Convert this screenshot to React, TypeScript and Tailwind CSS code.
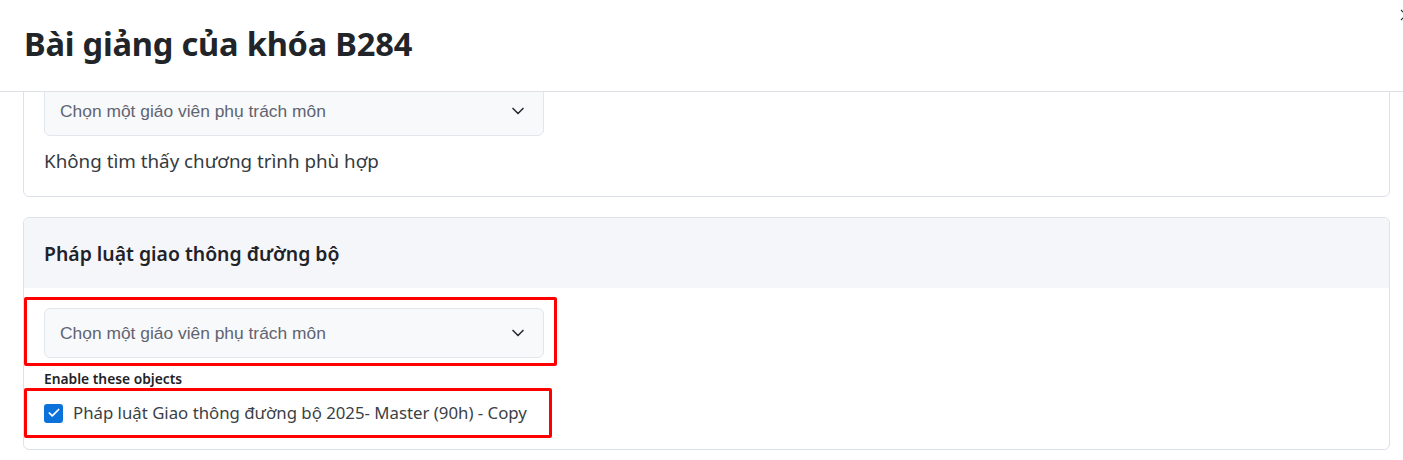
import React from "react";
import { ChevronDown, Check } from "lucide-react";

const TeacherSelect = () => (
	<div className="w-[500px] h-[50px] flex items-center justify-between pl-[15px] pr-[15px] bg-[#f8f9fb] border border-[#e3e6ec] rounded-[6px]">
		<span className="text-[17.4px] text-[#5f6471] font-['Liberation_Sans',sans-serif]">Chọn một giáo viên phụ trách môn</span>
		<ChevronDown className="w-5 h-5 text-[#2b2f36]" strokeWidth={2} />
	</div>
);

export default function App() {
	return (
		<div className="w-[1403px] h-[460px] bg-white flex flex-col overflow-hidden font-['Noto_Sans',sans-serif] text-[#212529] relative">
			{/* Modal header */}
			<div className="h-[92px] shrink-0 border-b border-[#dee2e6] flex items-center px-6 relative z-10 bg-white">
				<h1 className="text-[32.6px] font-bold leading-none tracking-[-0.2px] mt-[-2px]">Bài giảng của khóa B284</h1>
				<svg className="absolute left-[1400px] top-[9px] w-3 h-3" viewBox="0 0 12 12" fill="none" stroke="#333" strokeWidth="1.2">
					<path d="M1 1l10 10M11 1L1 11" />
				</svg>
			</div>

			{/* Scrolled body */}
			<div className="flex-1 overflow-hidden pl-[23px] pr-[13px]">
				<div className="mt-[-27px] border border-[#dde1ea] rounded-[6px] pt-5 px-5 pb-[21px]">
					<TeacherSelect />
					<p className="mt-3 text-[18.8px] leading-[27px] text-[#343a40]">Không tìm thấy chương trình phù hợp</p>
				</div>

				<div className="mt-5 border border-[#dde1ea] rounded-[6px]">
					<div className="h-[70px] bg-[#f5f6fa] rounded-t-[6px] flex items-center px-5">
						<h2 className="text-[19.4px] font-semibold text-[#1f2328] mt-[1px]">Pháp luật giao thông đường bộ</h2>
					</div>
					<div className="px-5 pt-5 pb-[26px]">
						<div className="relative">
							<TeacherSelect />
							<div className="absolute left-[-20px] top-[-11px] w-[533px] h-[69px] border-[3px] border-[#ff0000] rounded-[2px] pointer-events-none" />
						</div>
						<div className="mt-[12px] text-[13.8px] font-semibold leading-[18px] text-[#1f2328]">Enable these objects</div>
						<div className="relative mt-[15px] flex items-center gap-[10px] h-[20px]">
							<span className="w-[19px] h-[19px] rounded-[3px] bg-[#0b72d9] flex items-center justify-center">
								<Check className="w-[14px] h-[14px] text-white" strokeWidth={3} />
							</span>
							<span className="text-[16.8px] text-[#3b3f46]">Pháp luật Giao thông đường bộ 2025- Master (90h) - Copy</span>
							<div className="absolute left-[-20px] top-[-15px] w-[528px] h-[50px] border-[3px] border-[#ff0000] rounded-[2px] pointer-events-none" />
						</div>
					</div>
				</div>
			</div>
		</div>
	);
}
